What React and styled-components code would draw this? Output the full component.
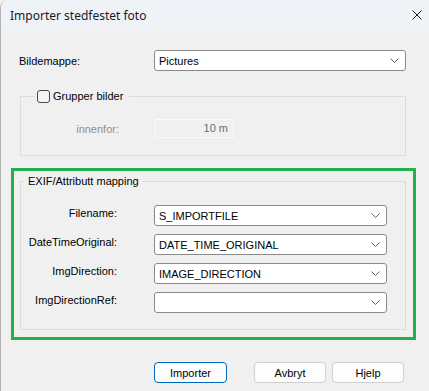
import React from "react";
import styled, { createGlobalStyle } from "styled-components";

const GlobalStyle = createGlobalStyle`
  html, body {
    margin: 0;
    padding: 0;
    background: #f0f0f0;
  }
  * {
    box-sizing: border-box;
  }
`;

const Window = styled.div`
  width: 429px;
  height: 391px;
  background: #f0f0f0;
  border-left: 1px solid #b4b4b4;
  border-top-left-radius: 8px;
  overflow: hidden;
  font-family: "Liberation Sans", Arial, sans-serif;
  font-size: 11px;
  color: #000;
  display: flex;
  flex-direction: column;
`;

const TitleBar = styled.div`
  height: 30px;
  flex: none;
  background: #eff3f8;
  display: flex;
  align-items: center;
  justify-content: space-between;
  padding: 0 7px 0 9px;
  font-family: "Noto Sans", "Open Sans", sans-serif;
  font-size: 12px;
  color: #1a1a1a;
`;

const CloseButton = styled.div`
  width: 10px;
  height: 10px;
  display: flex;
  margin-top: -1px;
`;

const Body = styled.div`
  display: flex;
  flex-direction: column;
  padding-top: 20px;
`;

const TopRow = styled.div`
  display: flex;
  align-items: center;
  margin: 0 23px 0 18px;
`;

const TopLabel = styled.div`
  width: 135px;
  flex: none;
`;

const Combo = styled.div`
  height: 21px;
  width: ${(p) => p.$width}px;
  flex: none;
  background: #fff;
  border: 1px solid #8a8a8a;
  border-radius: 3px;
  display: flex;
  align-items: center;
  justify-content: space-between;
  padding: 0 6px 0 4px;
  white-space: nowrap;
`;

const Chevron = () => (
  <svg width="9" height="5" viewBox="0 0 9 5">
    <polyline
      points="0.5,0.5 4.5,4.5 8.5,0.5"
      fill="none"
      stroke="#606060"
      strokeWidth="1"
    />
  </svg>
);

const GroupBox = styled.fieldset`
  margin: ${(p) => p.$margin};
  padding: ${(p) => p.$padding};
  border: 1px solid #dcdcdc;
  min-width: 0;
`;

const Legend = styled.legend`
  margin-left: ${(p) => p.$offset}px;
  padding: ${(p) => p.$padding};
  display: flex;
  align-items: center;
  gap: 3px;
  height: 13px;
  line-height: 13px;
`;

const CheckBox = styled.span`
  width: 13px;
  height: 13px;
  border: 1px solid #4a4a4a;
  border-radius: 3px;
  background: #f5f5f5;
  display: inline-block;
`;

const FieldRow = styled.div`
  display: flex;
  align-items: center;
`;

const FieldLabel = styled.div`
  width: ${(p) => p.$width}px;
  margin-right: ${(p) => p.$gap}px;
  text-align: right;
  flex: none;
  color: ${(p) => (p.$disabled ? "#8f8f8f" : "#000")};
  margin-top: ${(p) => (p.$raise ? "-6px" : "0")};
`;

const DisabledInput = styled.div`
  width: 79px;
  height: 19px;
  border: 1px solid #fbfbfb;
  background: #f0f0f0;
  color: #6d6d6d;
  text-align: right;
  padding-right: 5px;
  line-height: 17px;
`;

const Highlight = styled.div`
  margin: 12px 13px 0 10px;
  border: 3px solid #22b14c;
  padding: 4px 7px 7px 6px;
`;

const MappingList = styled.div`
  display: flex;
  flex-direction: column;
  gap: 8px;
`;

const ButtonRow = styled.div`
  display: flex;
  justify-content: flex-end;
  padding-right: 25px;
  margin-top: 22px;
`;

const Button = styled.div`
  width: ${(p) => p.$width}px;
  height: 21px;
  margin-right: ${(p) => p.$gap || 0}px;
  background: #fdfdfd;
  border: 1px solid ${(p) => (p.$primary ? "#0067c0" : "#d0d0d0")};
  border-radius: 4px;
  display: flex;
  align-items: center;
  justify-content: center;
`;

const mappings = [
  { label: "Filename:", value: "S_IMPORTFILE" },
  { label: "DateTimeOriginal:", value: "DATE_TIME_ORIGINAL" },
  { label: "ImgDirection:", value: "IMAGE_DIRECTION" },
  { label: "ImgDirectionRef:", value: "" },
];

export default function App() {
  return (
    <>
      <GlobalStyle />
      <Window>
        <TitleBar>
          <span>Importer stedfestet foto</span>
          <CloseButton>
            <svg width="10" height="10" viewBox="0 0 10 10">
              <path d="M0.5 0.5 L9.5 9.5 M9.5 0.5 L0.5 9.5" stroke="#1a1a1a" strokeWidth="1" />
            </svg>
          </CloseButton>
        </TitleBar>
        <Body>
          <TopRow>
            <TopLabel>Bildemappe:</TopLabel>
            <Combo $width={252}>
              <span>Pictures</span>
              <Chevron />
            </Combo>
          </TopRow>

          <GroupBox $margin="19px 23px 0 19px" $padding="16px 0 17px 0">
            <Legend $offset={14} $padding="0 6px 0 2px">
              <CheckBox />
              <span>Grupper bilder</span>
            </Legend>
            <FieldRow>
              <FieldLabel $width={98} $gap={36} $disabled>
                innenfor:
              </FieldLabel>
              <DisabledInput>10 m</DisabledInput>
            </FieldRow>
          </GroupBox>

          <Highlight>
            <GroupBox $margin="0" $padding="17px 0 16px 0">
              <Legend $offset={3} $padding="0 3px 0 4px">
                EXIF/Attributt mapping
              </Legend>
              <MappingList>
                {mappings.map((m) => (
                  <FieldRow key={m.label}>
                    <FieldLabel $width={96} $gap={37} $raise>
                      {m.label}
                    </FieldLabel>
                    <Combo $width={233}>
                      <span>{m.value}</span>
                      <Chevron />
                    </Combo>
                  </FieldRow>
                ))}
              </MappingList>
            </GroupBox>
          </Highlight>

          <ButtonRow>
            <Button $width={73} $gap={27} $primary>
              Importer
            </Button>
            <Button $width={72} $gap={6}>
              Avbryt
            </Button>
            <Button $width={72}>Hjelp</Button>
          </ButtonRow>
        </Body>
      </Window>
    </>
  );
}
